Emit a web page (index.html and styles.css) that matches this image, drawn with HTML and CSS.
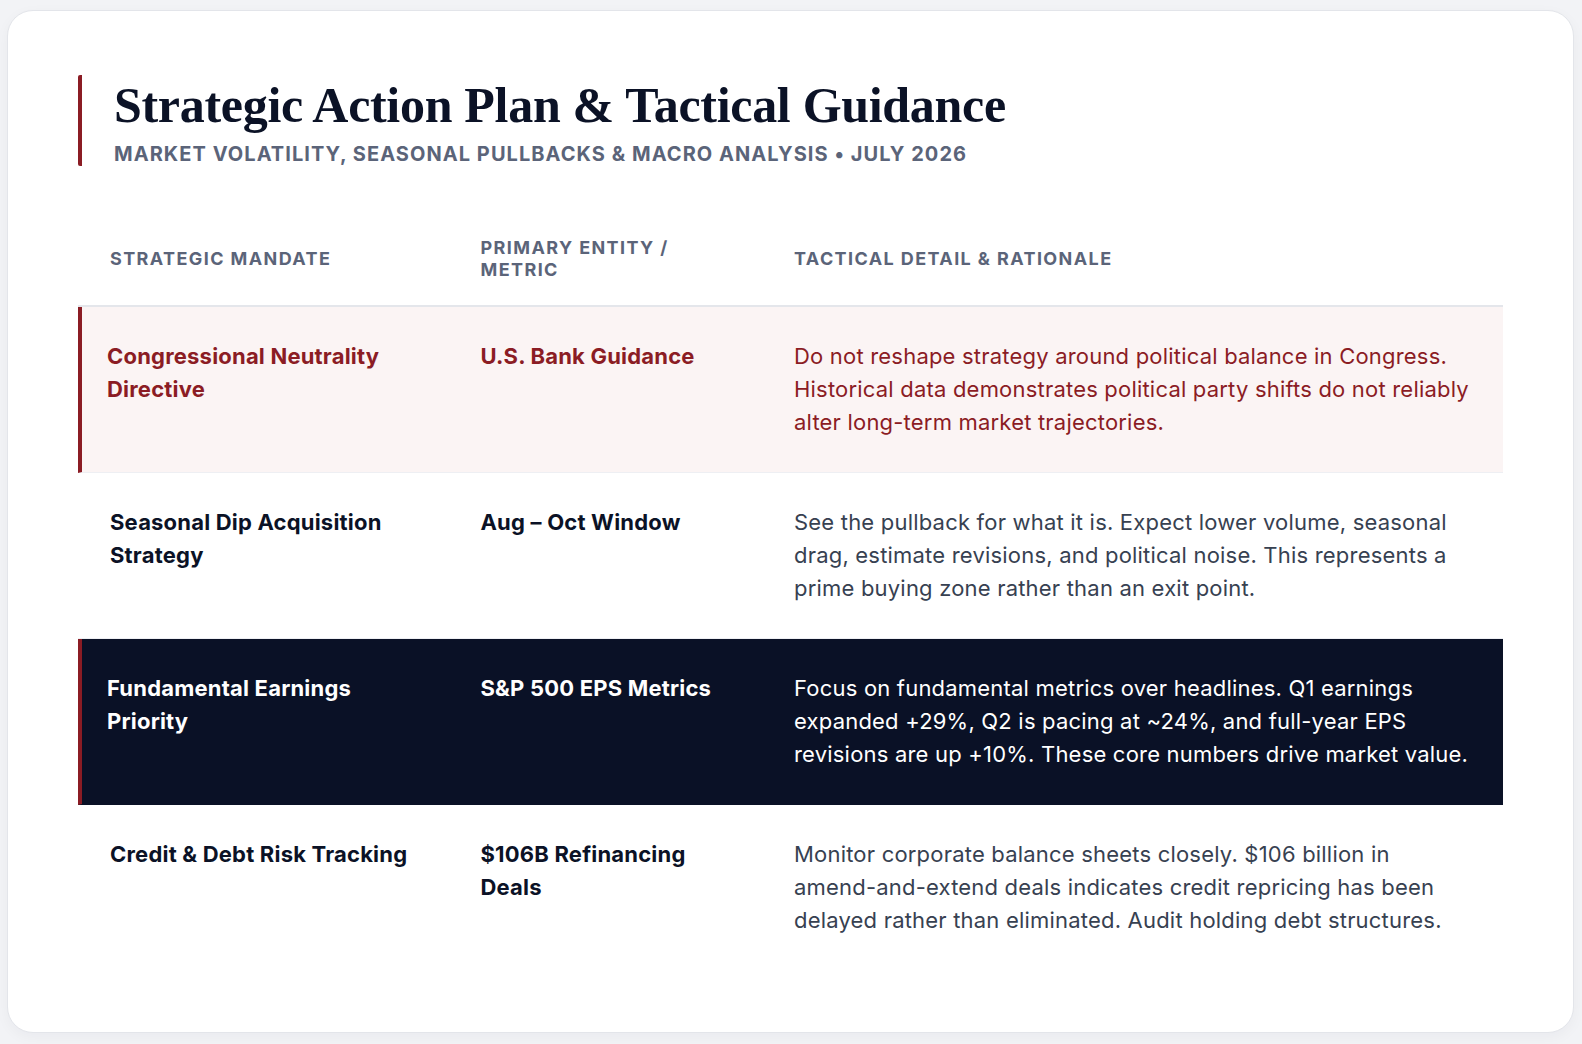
FILE: index.html
```html
<!DOCTYPE html>
<html lang="en">
<head>
<meta charset="utf-8">
<title>Strategic Action Plan &amp; Tactical Guidance</title>
<link rel="stylesheet" href="styles.css">
</head>
<body>
<main class="card">
  <header class="page-header">
    <h1 class="title">Strategic Action Plan &amp; Tactical Guidance</h1>
    <p class="subtitle">Market Volatility, Seasonal Pullbacks &amp; Macro Analysis • July 2026</p>
  </header>
  <table class="plan">
    <colgroup>
      <col class="c-mandate">
      <col class="c-entity">
      <col class="c-detail">
    </colgroup>
    <thead>
      <tr>
        <th>Strategic Mandate</th>
        <th>Primary Entity / Metric</th>
        <th>Tactical Detail &amp; Rationale</th>
      </tr>
    </thead>
    <tbody>
      <tr class="row-alert">
        <td class="mandate">Congressional Neutrality Directive</td>
        <td class="entity">U.S. Bank Guidance</td>
        <td class="detail">Do not reshape strategy around political balance in Congress. Historical data demonstrates political party shifts do not reliably alter long-term market trajectories.</td>
      </tr>
      <tr>
        <td class="mandate">Seasonal Dip Acquisition Strategy</td>
        <td class="entity">Aug – Oct Window</td>
        <td class="detail">See the pullback for what it is. Expect lower volume, seasonal drag, estimate revisions, and political noise. This represents a prime buying zone rather than an exit point.</td>
      </tr>
      <tr class="row-dark">
        <td class="mandate">Fundamental Earnings Priority</td>
        <td class="entity">S&amp;P 500 EPS Metrics</td>
        <td class="detail">Focus on fundamental metrics over headlines. Q1 earnings expanded +29%, Q2 is pacing at ~24%, and full-year EPS revisions are up +10%. These core numbers drive market value.</td>
      </tr>
      <tr class="row-last">
        <td class="mandate">Credit &amp; Debt Risk Tracking</td>
        <td class="entity">$106B Refinancing Deals</td>
        <td class="detail">Monitor corporate balance sheets closely. $106 billion in amend-and-extend deals indicates credit repricing has been delayed rather than eliminated. Audit holding debt structures.</td>
      </tr>
    </tbody>
  </table>
</main>
</body>
</html>
```

FILE: styles.css
```css
* { box-sizing: border-box; }

html, body {
  margin: 0;
  background: #f2f3f6;
}

body {
  padding: 10px 8px 13px 7px;
  font-family: Inter, "Noto Sans", sans-serif;
  color: #374151;
}

.card {
  background: #ffffff;
  border: 1px solid #e3e5ea;
  border-radius: 26px;
  padding: 64px 70px 62px 70px;
  box-shadow: 0 4px 14px rgba(15, 23, 42, 0.04);
}

.page-header {
  border-left: 4px solid #8b1c24;
  border-radius: 2px;
  padding: 2px 0 0 32px;
  margin-bottom: 46px;
}

.title {
  margin: 0;
  font-family: "Liberation Serif", "DejaVu Serif", serif;
  font-weight: 700;
  font-size: 50px;
  line-height: 56px;
  letter-spacing: -0.3px;
  color: #0b1226;
}

.subtitle {
  margin: 9px 0 0 0;
  font-size: 20px;
  line-height: 24px;
  font-weight: 700;
  letter-spacing: 1.05px;
  text-transform: uppercase;
  color: #5b6479;
}

.plan {
  width: 100%;
  border-collapse: separate;
  border-spacing: 0;
  table-layout: fixed;
}

.c-mandate { width: 26%; }
.c-entity { width: 22%; }
.c-detail { width: 52%; }

.plan th {
  text-align: left;
  vertical-align: middle;
  padding: 25px 32px 24px 32px;
  font-size: 18px;
  line-height: 22px;
  font-weight: 700;
  letter-spacing: 1.4px;
  text-transform: uppercase;
  color: #5b6479;
  border-bottom: 2px solid #e4e6eb;
}

.plan td {
  vertical-align: top;
  padding: 33px 32px;
  font-size: 22px;
  line-height: 33px;
  letter-spacing: 0.2px;
  border-bottom: 1px solid #eeeff3;
}

.plan td.mandate,
.plan td.entity {
  font-weight: 700;
  color: #0b1226;
}

.plan td.detail {
  color: #374151;
}

.row-alert td {
  background: #fbf4f4;
}

.row-alert td.mandate,
.row-alert td.entity,
.row-alert td.detail {
  color: #8b1c24;
}

.row-alert td.mandate,
.row-dark td.mandate {
  border-left: 4px solid #8b1c24;
  padding-left: 25px;
}

.row-dark td {
  background: #0a1126;
  border-bottom-color: #0a1126;
}

.row-dark td.mandate,
.row-dark td.entity,
.row-dark td.detail {
  color: #ffffff;
}

.row-last td {
  border-bottom: none;
}
```
